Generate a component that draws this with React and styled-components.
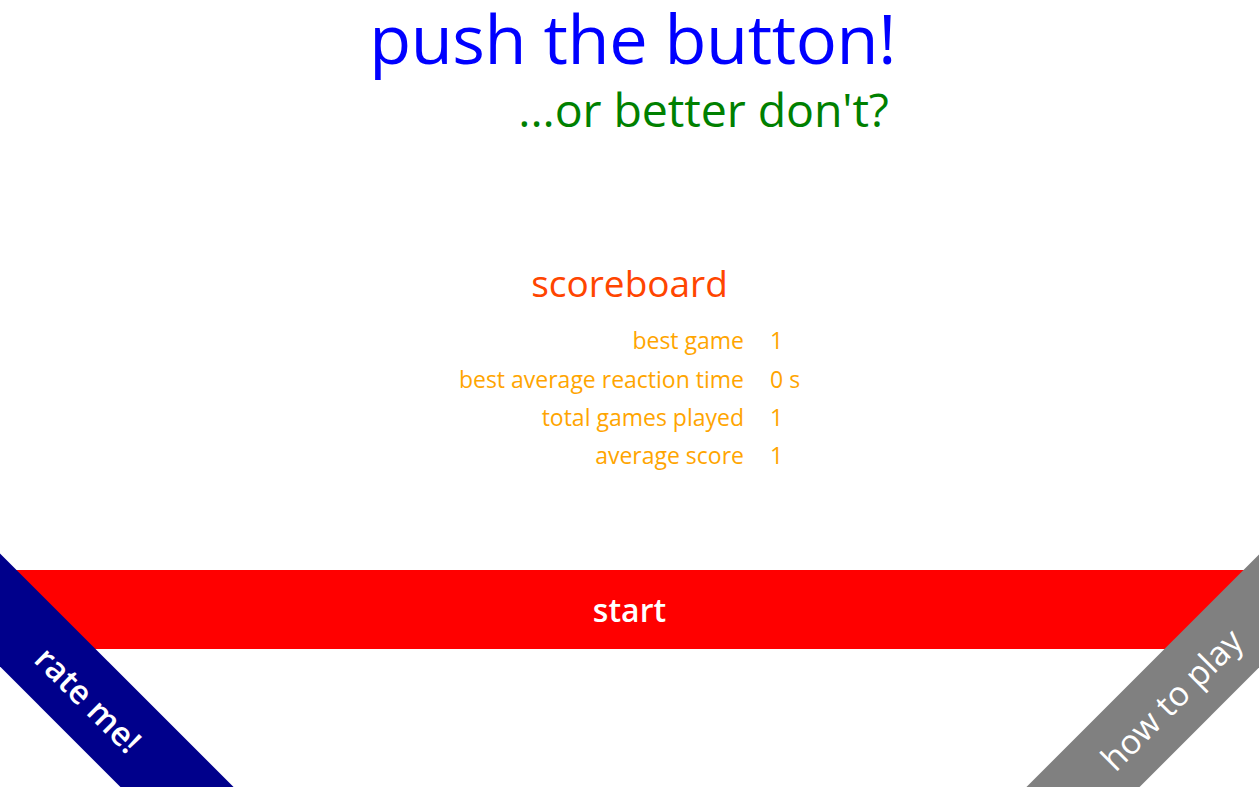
import React from "react";
import styled, { createGlobalStyle } from "styled-components";

const Global = createGlobalStyle`
  html, body {
    margin: 0;
    padding: 0;
    background: #ffffff;
  }
  body {
    font-family: "Open Sans", "Noto Sans", sans-serif;
  }
`;

const Page = styled.div`
  position: relative;
  height: 787px;
  overflow: hidden;
  display: flex;
  flex-direction: column;
  align-items: center;
`;

const Header = styled.header`
  display: flex;
  flex-direction: column;
  align-items: flex-end;
  padding-left: 6px;
  gap: 9px;
`;

const Title = styled.h1`
  margin: 0;
  font-size: 68.5px;
  font-weight: 400;
  line-height: 1.1;
  color: #0000ff;
  letter-spacing: -0.4px;
`;

const Subtitle = styled.h2`
  margin: 0 7px 0 0;
  font-size: 46.5px;
  font-weight: 400;
  line-height: 1.1;
  color: #008000;
  letter-spacing: -0.1px;
`;

const Board = styled.section`
  margin-top: 128px;
  display: flex;
  flex-direction: column;
  align-items: center;
`;

const BoardTitle = styled.h3`
  margin: 0;
  font-size: 37px;
  font-weight: 400;
  line-height: 1.1;
  color: #ff4500;
`;

const Stats = styled.div`
  margin-top: 17px;
  display: grid;
  grid-template-columns: auto auto;
  column-gap: 26px;
`;

const Cell = styled.span`
  text-align: ${(p) => (p.$value ? "left" : "right")};
  font-size: 23px;
  line-height: 38.4px;
  color: #ffa500;
`;

const StartButton = styled.button`
  position: absolute;
  left: 0;
  right: 0;
  top: 570px;
  height: 79px;
  border: none;
  background: #ff0000;
  color: #ffffff;
  font-family: "Open Sans", "Noto Sans", sans-serif;
  font-size: 32px;
  font-weight: 600;
  cursor: pointer;
`;

const Ribbon = styled.a`
  position: absolute;
  width: 420px;
  height: 80px;
  left: ${(p) => p.$cx - 210}px;
  top: ${(p) => p.$cy - 40}px;
  transform: rotate(${(p) => p.$angle}deg);
  background: ${(p) => p.$bg};
  color: #ffffff;
  display: flex;
  align-items: center;
  justify-content: center;
  font-size: ${(p) => p.$size}px;
  font-weight: ${(p) => p.$weight};
  text-decoration: none;
  z-index: 2;
`;

const stats = [
  ["best game", "1"],
  ["best average reaction time", "0 s"],
  ["total games played", "1"],
  ["average score", "1"],
];

export default function App() {
  return (
    <>
      <Global />
      <Page>
        <Header>
          <Title>push the button!</Title>
          <Subtitle>...or better don't?</Subtitle>
        </Header>
        <Board>
          <BoardTitle>scoreboard</BoardTitle>
          <Stats>
            {stats.map(([label, value]) => (
              <React.Fragment key={label}>
                <Cell>{label}</Cell>
                <Cell $value>{value}</Cell>
              </React.Fragment>
            ))}
          </Stats>
        </Board>
        <StartButton>start</StartButton>
        <Ribbon href="#" $cx={89} $cy={699} $angle={45} $bg="#00008b" $weight={600} $size={33}>
          rate me!
        </Ribbon>
        <Ribbon href="#" $cx={1171} $cy={699} $angle={-45} $bg="#808080" $weight={400} $size={34}>
          how to play
        </Ribbon>
      </Page>
    </>
  );
}
